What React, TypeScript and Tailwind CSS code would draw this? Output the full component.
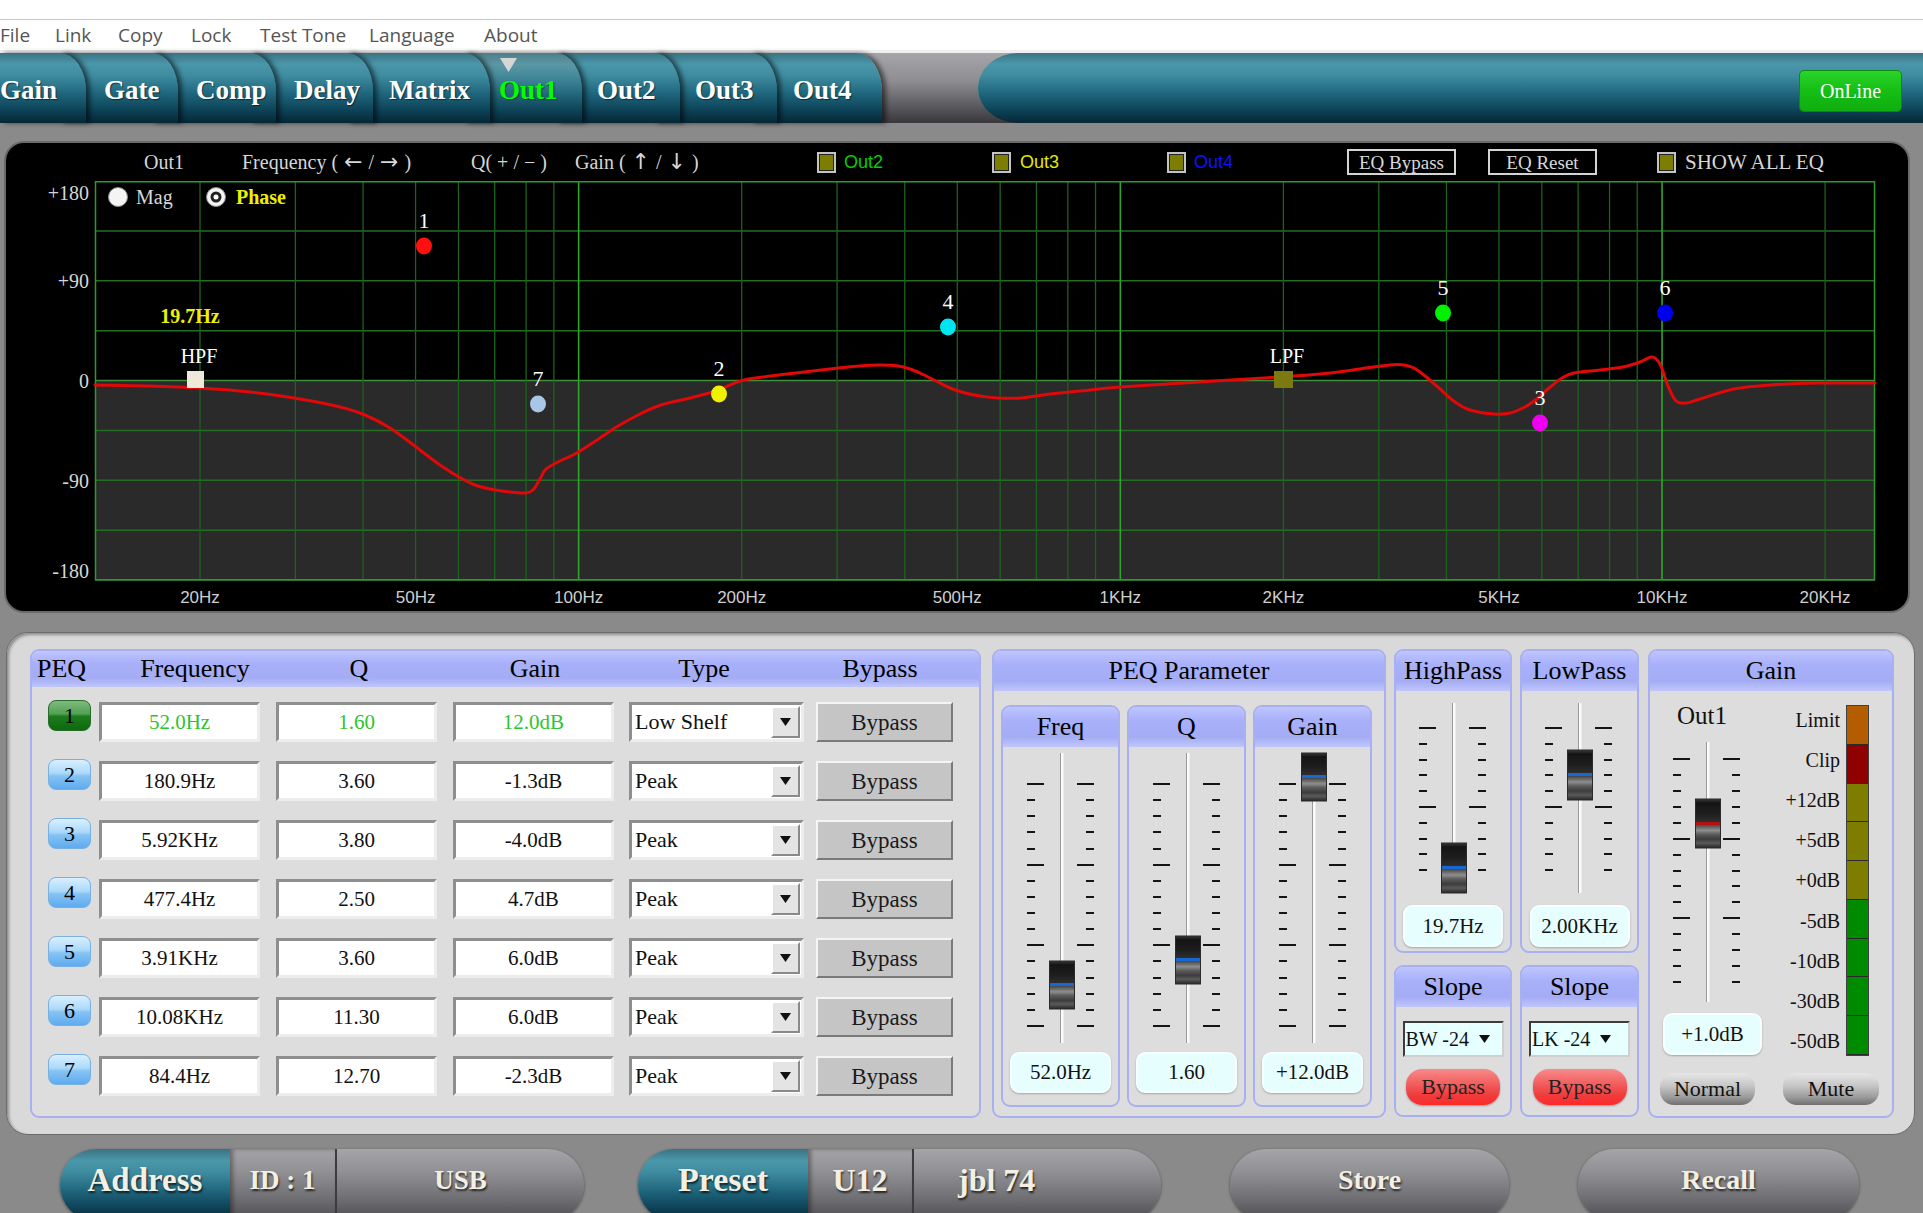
import React from "react";

const SERIF = "font-['Liberation_Serif',serif]";
const SANS = "font-['Liberation_Sans',sans-serif]";
const OPEN = "font-['Open_Sans',sans-serif]";
const ARROW = "inline-block mx-[6px] font-['DejaVu_Sans',sans-serif] text-[22px]";

const TEAL =
  "bg-[linear-gradient(to_bottom,#3b7283_0%,#4b97aa_16%,#3f8ca0_32%,#1f667d_58%,#0e455a_80%,#052736_100%)]";
const TEAL_ACTIVE =
  "bg-[linear-gradient(to_bottom,#4f7d89_0%,#5b97a5_16%,#468b9c_32%,#23687d_58%,#0f465a_80%,#052736_100%)]";
const GRAYPILL =
  "bg-[linear-gradient(to_bottom,#a5a5a9_0%,#929296_30%,#737377_65%,#4d4d51_100%)]";
const GRAYMETAL =
  "bg-[linear-gradient(to_bottom,#a6a6aa_0%,#8e8e92_40%,#5c5c60_75%,#38383c_100%)]";
const LAV_HEAD =
  "bg-[linear-gradient(to_bottom,#bec5ff_0%,#a8b0fa_35%,#a4acf6_75%,#c0c6fb_100%)]";
const GROUP =
  "border-2 border-[#a9b0f1] rounded-[9px] bg-[#dddddd] overflow-hidden flex flex-col";
const INSET =
  "bg-white border-[3px] border-t-[#8e8e8e] border-l-[#8e8e8e] border-r-[#ededed] border-b-[#ededed]";
const RAISED =
  "bg-[#c5c5c5] border-2 border-t-[#f4f4f4] border-l-[#f4f4f4] border-r-[#7a7a7a] border-b-[#7a7a7a]";
const VALUEBOX =
  "bg-[#e6fefe] rounded-[9px] border-2 border-[#f6ffff] shadow-[0_1px_2px_rgba(0,0,0,0.25)] flex items-center justify-center text-[21px] text-[#111] leading-none";

function Menu() {
  const items: [string, string][] = [
    ["File", "w-[55px]"],
    ["Link", "w-[63px]"],
    ["Copy", "w-[73px]"],
    ["Lock", "w-[69px]"],
    ["Test Tone", "w-[109px]"],
    ["Language", "w-[115px]"],
    ["About", "w-[80px]"],
  ];
  return (
    <>
      <div className="h-[20px] bg-white border-b border-[#c8c8c8]" />
      <div className={`h-[30px] bg-white flex items-center text-[19px] text-[#555] ${OPEN}`}>
        {items.map(([t, w]) => (
          <div key={t} className={`${w} whitespace-nowrap leading-none`}>
            {t}
          </div>
        ))}
      </div>
      <div className="h-[3px] bg-[#efefef]" />
    </>
  );
}

function TabBar() {
  const tabs = [
    { t: "Gain", cls: "w-[86px] pl-0 z-[9]" },
    { t: "Gate", cls: "w-[118px] pl-[44px] -ml-[26px] z-[8]" },
    { t: "Comp", cls: "w-[124px] pl-[44px] -ml-[26px] z-[7]" },
    { t: "Delay", cls: "w-[123px] pl-[44px] -ml-[26px] z-[6]" },
    { t: "Matrix", cls: "w-[143px] pl-[42px] -ml-[26px] z-[5]" },
    { t: "Out1", cls: "w-[118px] pl-[35px] -ml-[26px] z-[4]", active: true },
    { t: "Out2", cls: "w-[124px] pl-[41px] -ml-[26px] z-[3]" },
    { t: "Out3", cls: "w-[123px] pl-[41px] -ml-[26px] z-[2]" },
    { t: "Out4", cls: "w-[131px] pl-[42px] -ml-[26px] z-[1]" },
  ];
  return (
    <div className={`flex h-[70px] ${GRAYMETAL}`}>
      <div className="flex h-full">
        {tabs.map((tb) => (
          <div
            key={tb.t}
            className={`relative ${tb.cls} h-full flex items-center pt-[4px] rounded-tr-[26px_38px] ${
              tb.active ? TEAL_ACTIVE : TEAL
            } shadow-[4px_0_5px_rgba(0,0,0,0.55)] text-[27px] font-bold ${
              tb.active ? "text-[#00ff00]" : "text-white"
            } [text-shadow:1px_1px_1px_rgba(0,0,0,0.5)] whitespace-nowrap leading-none`}
          >
            {tb.active && (
              <svg className="absolute left-[36px] top-[5px]" width="17" height="14" viewBox="0 0 17 14">
                <polygon points="0,0 17,0 8.5,14" fill="#d6d6d6" />
              </svg>
            )}
            {tb.t}
          </div>
        ))}
      </div>
      <div
        className={`ml-[96px] flex-1 h-full rounded-l-[40px_35px] ${TEAL} flex items-center justify-end pr-[21px]`}
      >
        <div className="mt-[6px] w-[103px] h-[42px] rounded-[5px] bg-[linear-gradient(to_bottom,#2ad42a,#15be15_50%,#0fae0f)] border border-[#0c8c0c] flex items-center justify-center text-[20px] text-white leading-none">
          OnLine
        </div>
      </div>
    </div>
  );
}

function Check() {
  return <div className="w-[19px] h-[21px] border-2 border-[#c4c4c4] bg-[#7d7d00] shadow-[inset_0_0_0_1px_#222]" />;
}

const fx = (f: number) => 200 + 541.7 * Math.log10(f / 20);

function smoothPath(pts: number[][]) {
  let d = `M${pts[0][0]},${pts[0][1]}`;
  for (let i = 0; i < pts.length - 1; i++) {
    const p0 = pts[i - 1] || pts[i];
    const p1 = pts[i];
    const p2 = pts[i + 1];
    const p3 = pts[i + 2] || p2;
    const c1x = p1[0] + (p2[0] - p0[0]) / 6;
    const c1y = p1[1] + (p2[1] - p0[1]) / 6;
    const c2x = p2[0] - (p3[0] - p1[0]) / 6;
    const c2y = p2[1] - (p3[1] - p1[1]) / 6;
    d += ` C${c1x.toFixed(1)},${c1y.toFixed(1)} ${c2x.toFixed(1)},${c2y.toFixed(1)} ${p2[0]},${p2[1]}`;
  }
  return d;
}

const curvePts = [
  [95, 385], [150, 386], [200, 388], [250, 392], [300, 399], [340, 407], [365, 415], [390, 428],
  [416, 447], [440, 465], [459, 477], [475, 485], [490, 489], [510, 492], [526, 493], [533, 490],
  [540, 479], [546, 469], [560, 461], [575, 454], [600, 438], [618, 426], [640, 414], [661, 405],
  [690, 398], [716, 391], [730, 385], [744, 380], [770, 376], [796, 373], [830, 369], [860, 366],
  [880, 365], [898, 366], [910, 369], [922, 374], [936, 381], [950, 388], [965, 393], [980, 396],
  [997, 398], [1021, 398], [1050, 394], [1080, 391], [1120, 387], [1200, 382], [1279, 377],
  [1320, 374], [1360, 369], [1390, 365], [1404, 365], [1414, 368], [1425, 376], [1439, 388],
  [1455, 402], [1470, 410], [1494, 414], [1510, 413], [1525, 407], [1538, 398], [1549, 388],
  [1562, 378], [1574, 373], [1600, 370], [1623, 367], [1640, 362], [1651, 357], [1656, 359],
  [1661, 366], [1668, 386], [1676, 401], [1686, 403], [1700, 399], [1734, 389], [1770, 385],
  [1820, 383], [1875, 383],
];

function GraphPanel() {
  const hl = Array.from({ length: 9 }, (_, i) => 181 + i * 49.875);
  const freqs = [
    20, 30, 40, 50, 60, 70, 80, 90, 100, 200, 300, 400, 500, 600, 700, 800, 900, 1000, 2000, 3000,
    4000, 5000, 6000, 7000, 8000, 9000, 10000, 20000,
  ];
  const xlabels: [number, string][] = [
    [20, "20Hz"], [50, "50Hz"], [100, "100Hz"], [200, "200Hz"], [500, "500Hz"],
    [1000, "1KHz"], [2000, "2KHz"], [5000, "5KHz"], [10000, "10KHz"], [20000, "20KHz"],
  ];
  const ylabels: [number, string][] = [
    [200, "+180"], [288, "+90"], [388, "0"], [488, "-90"], [578, "-180"],
  ];
  const markers = [
    { n: "1", x: 424, y: 246, c: "#ff1010" },
    { n: "7", x: 538, y: 404, c: "#a8c6e6" },
    { n: "2", x: 719, y: 394, c: "#f0f000" },
    { n: "4", x: 948, y: 327, c: "#00e6f0" },
    { n: "5", x: 1443, y: 313, c: "#00f000" },
    { n: "6", x: 1665, y: 313, c: "#0000f0" },
    { n: "3", x: 1540, y: 423, c: "#f000f0" },
  ];
  return (
    <div className="ml-[6px] mt-[20px] w-[1902px] h-[468px] rounded-[18px] bg-black shadow-[0_0_0_2px_#6a6a6a] overflow-hidden flex flex-col">
      <div className="h-[38px] flex items-center text-[20px] text-[#d6d6d6] whitespace-nowrap leading-none">
        <div className="w-[138px] shrink-0" />
        <div className="w-[98px] shrink-0">Out1</div>
        <div className="w-[229px] shrink-0">
          Frequency (<span className={ARROW}>←</span>/<span className={ARROW}>→</span>)
        </div>
        <div className="w-[104px] shrink-0">Q( + / − )</div>
        <div className="w-[242px] shrink-0">
          Gain (<span className={ARROW}>↑</span>/<span className={ARROW}>↓</span>)
        </div>
        <div className="w-[175px] shrink-0 flex items-center">
          <Check />
          <span className={`ml-[8px] text-[18px] text-[#00d000] ${SANS}`}>Out2</span>
        </div>
        <div className="w-[175px] shrink-0 flex items-center">
          <Check />
          <span className={`ml-[9px] text-[18px] text-[#e6e600] ${SANS}`}>Out3</span>
        </div>
        <div className="w-[180px] shrink-0 flex items-center">
          <Check />
          <span className={`ml-[8px] text-[18px] text-[#1010ff] ${SANS}`}>Out4</span>
        </div>
        <div className="w-[141px] shrink-0">
          <div className="w-[109px] h-[26px] border-2 border-[#d4d4d4] bg-black flex items-center justify-center text-[19px] text-[#d8d8d8]">
            EQ Bypass
          </div>
        </div>
        <div className="w-[169px] shrink-0">
          <div className="w-[109px] h-[26px] border-2 border-[#d4d4d4] bg-black flex items-center justify-center text-[19px] text-[#d8d8d8]">
            EQ Reset
          </div>
        </div>
        <div className="flex items-center">
          <Check />
          <span className="ml-[9px] text-[21px] text-[#d6d6d6]">SHOW ALL EQ</span>
        </div>
      </div>
      <svg width={1902} height={430} viewBox="6 181 1902 430" className="block">
        <rect x={95} y={380.5} width={1780} height={199.5} fill="#2a2a2a" />
        {hl.map((y, i) => (
          <line key={`h${i}`} x1={95} x2={1875} y1={y} y2={y} stroke={i === 4 ? "#3f8f3f" : "#246e24"} strokeWidth={1.5} />
        ))}
        {freqs.map((f) => {
          const major = f === 100 || f === 1000 || f === 10000;
          const x = fx(f);
          return (
            <line key={`v${f}`} x1={x} x2={x} y1={181} y2={580} stroke={major ? "#2fa52f" : "#1d631d"} strokeWidth={major ? 1.6 : 1.3} />
          );
        })}
        <rect x={95.5} y={181.75} width={1779} height={398} fill="none" stroke="#2e9a2e" strokeWidth={1.5} />
        {ylabels.map(([y, t]) => (
          <text key={t} x={89} y={y} textAnchor="end" fill="#d6d6d6" fontSize={20} fontFamily="Liberation Serif, serif">
            {t}
          </text>
        ))}
        {xlabels.map(([f, t]) => (
          <text key={t} x={fx(f)} y={603} textAnchor="middle" fill="#cfcfcf" fontSize={17} fontFamily="Liberation Sans, sans-serif">
            {t}
          </text>
        ))}
        <circle cx={118} cy={197} r={9.5} fill="#f4f4f4" stroke="#8a8a8a" strokeWidth={1} />
        <text x={136} y={204} fill="#d6d6d6" fontSize={20} fontFamily="Liberation Serif, serif">
          Mag
        </text>
        <circle cx={216} cy={197} r={9.5} fill="#f4f4f4" stroke="#8a8a8a" strokeWidth={1} />
        <circle cx={216} cy={197} r={5.5} fill="#222" />
        <circle cx={216} cy={197} r={2.5} fill="#fff" />
        <text x={236} y={204} fill="#f0f000" fontSize={20} fontWeight="bold" fontFamily="Liberation Serif, serif">
          Phase
        </text>
        <path d={smoothPath(curvePts)} fill="none" stroke="#e00808" strokeWidth={3} strokeLinejoin="round" strokeLinecap="round" />
        <rect x={187} y={371} width={17} height={17} fill="#efe9dc" />
        <text x={199} y={363} textAnchor="middle" fill="#ffffff" fontSize={20} fontFamily="Liberation Serif, serif">
          HPF
        </text>
        <text x={190} y={323} textAnchor="middle" fill="#f0f000" fontSize={20} fontWeight="bold" fontFamily="Liberation Serif, serif">
          19.7Hz
        </text>
        <rect x={1274} y={371} width={19} height={17} fill="#7a7a10" />
        <text x={1287} y={363} textAnchor="middle" fill="#ffffff" fontSize={20} fontFamily="Liberation Serif, serif">
          LPF
        </text>
        {markers.map((m) => (
          <g key={m.n}>
            <ellipse cx={m.x} cy={m.y} rx={8} ry={8.5} fill={m.c} />
            <text x={m.x} y={m.y - 18} textAnchor="middle" fill="#ffffff" fontSize={22} fontFamily="Liberation Serif, serif">
              {m.n}
            </text>
          </g>
        ))}
      </svg>
    </div>
  );
}

type FaderProps = {
  id: string;
  w: number;
  h: number;
  cx: number;
  t0: number;
  t1: number;
  tickStart: number;
  step: number;
  n: number;
  majors: number[];
  thumbTop: number;
  thumbH: number;
  line: string;
};

function Fader({ id, w, h, cx, t0, t1, tickStart, step, n, majors, thumbTop, thumbH, line }: FaderProps) {
  const ticks = Array.from({ length: n }, (_, i) => {
    const y = Math.round(tickStart + i * step);
    const major = majors.includes(i);
    return (
      <g key={i}>
        <line x1={cx - 35} x2={major ? cx - 18 : cx - 27} y1={y} y2={y} stroke="#151515" strokeWidth={2} />
        <line x1={major ? cx + 15 : cx + 24} x2={cx + 32} y1={y} y2={y} stroke="#151515" strokeWidth={2} />
      </g>
    );
  });
  return (
    <svg width={w} height={h} className="block shrink-0">
      <defs>
        <linearGradient id={`th-${id}`} x1="0" y1="0" x2="0" y2="1">
          <stop offset="0" stopColor="#3a3a3a" />
          <stop offset="0.08" stopColor="#141414" />
          <stop offset="0.3" stopColor="#1e1e1e" />
          <stop offset="0.46" stopColor="#2e2e2e" />
          <stop offset="0.465" stopColor={line} />
          <stop offset="0.525" stopColor={line} />
          <stop offset="0.53" stopColor="#4a4a4a" />
          <stop offset="0.64" stopColor="#8e8e8e" />
          <stop offset="0.72" stopColor="#5c5c5c" />
          <stop offset="0.82" stopColor="#3c3c3c" />
          <stop offset="0.9" stopColor="#5a5a5a" />
          <stop offset="1" stopColor="#262626" />
        </linearGradient>
      </defs>
      <rect x={cx - 1.5} y={t0} width={3} height={t1 - t0} fill="#fbfbfb" />
      <line x1={cx - 1.5} x2={cx - 1.5} y1={t0} y2={t1} stroke="#9a9a9a" strokeWidth={1} />
      {ticks}
      <rect x={cx - 12.5} y={thumbTop} width={25} height={thumbH} fill={`url(#th-${id})`} stroke="#2a2a2a" strokeWidth={1} />
    </svg>
  );
}

function DownTri({ className }: { className?: string }) {
  return (
    <svg className={className} width="11" height="8" viewBox="0 0 11 8">
      <polygon points="0,0 11,0 5.5,8" fill="#111" />
    </svg>
  );
}

function PEQTable() {
  const rows = [
    ["52.0Hz", "1.60", "12.0dB", "Low Shelf"],
    ["180.9Hz", "3.60", "-1.3dB", "Peak"],
    ["5.92KHz", "3.80", "-4.0dB", "Peak"],
    ["477.4Hz", "2.50", "4.7dB", "Peak"],
    ["3.91KHz", "3.60", "6.0dB", "Peak"],
    ["10.08KHz", "11.30", "6.0dB", "Peak"],
    ["84.4Hz", "12.70", "-2.3dB", "Peak"],
  ];
  return (
    <div className={`${GROUP} w-[951px] h-[469px] shrink-0`}>
      <div className={`h-[36px] shrink-0 flex items-center ${LAV_HEAD} text-[26px] text-black leading-none`}>
        <div className="w-[68px] pl-[5px]">PEQ</div>
        <div className="w-[190px] text-center">Frequency</div>
        <div className="w-[138px] text-center">Q</div>
        <div className="w-[214px] text-center">Gain</div>
        <div className="w-[124px] text-center">Type</div>
        <div className="w-[213px] pl-[15px] text-center">Bypass</div>
      </div>
      <div className="flex flex-col gap-[19px] pt-[15px]">
        {rows.map((r, i) => {
          const c = i === 0 ? "text-[#2ec42e]" : "text-[#111]";
          return (
            <div key={i} className="h-[40px] flex items-center leading-none">
              <div
                className={`ml-[16px] mb-[13px] w-[43px] h-[31px] rounded-[8px] flex items-center justify-center text-[22px] text-black ${
                  i === 0
                    ? "bg-[linear-gradient(to_bottom,#7dbb7d_0%,#52a052_45%,#1f7b1f_52%,#0b6a0b_100%)] border border-[#2a6a2a]"
                    : "bg-[linear-gradient(to_bottom,#d8efff_0%,#acd9fa_45%,#86c3f3_55%,#5eabf0_100%)] border border-[#7ab0e0]"
                }`}
              >
                {i + 1}
              </div>
              <div className={`ml-[8px] w-[161px] h-[40px] ${INSET} flex items-center justify-center text-[21px] ${c}`}>{r[0]}</div>
              <div className={`ml-[16px] w-[161px] h-[40px] ${INSET} flex items-center justify-center text-[21px] ${c}`}>{r[1]}</div>
              <div className={`ml-[16px] w-[161px] h-[40px] ${INSET} flex items-center justify-center text-[21px] ${c}`}>{r[2]}</div>
              <div className={`ml-[15px] w-[175px] h-[40px] ${INSET} flex items-center`}>
                <span className="flex-1 pl-[3px] text-[22px] text-[#111] whitespace-nowrap">{r[3]}</span>
                <div className="mr-[1px] w-[29px] h-[32px] bg-[#e4e4e4] border-2 border-t-white border-l-white border-r-[#8a8a8a] border-b-[#8a8a8a] flex items-center justify-center">
                  <DownTri />
                </div>
              </div>
              <div className={`ml-[12px] w-[137px] h-[40px] ${RAISED} flex items-center justify-center text-[23px] text-[#1a1a1a]`}>Bypass</div>
            </div>
          );
        })}
      </div>
    </div>
  );
}

function Head({ children, h }: { children: React.ReactNode; h: string }) {
  return (
    <div className={`${h} shrink-0 flex items-center justify-center ${LAV_HEAD} text-[26px] text-black leading-none whitespace-nowrap`}>
      {children}
    </div>
  );
}

function SubFader({ id, title, thumbTop, value }: { id: string; title: string; thumbTop: number; value: string }) {
  return (
    <div className={`${GROUP} w-[119px] h-[402px] shrink-0`}>
      <Head h="h-[40px]">{title}</Head>
      <Fader id={id} w={115} h={300} cx={59} t0={6} t1={296} tickStart={37} step={16.13} n={16} majors={[0, 5, 10, 15]} thumbTop={thumbTop} thumbH={48} line="#1768d2" />
      <div className={`mt-[5px] mx-auto w-[101px] h-[41px] ${VALUEBOX}`}>{value}</div>
    </div>
  );
}

function PassColumn({ id, title, thumbTop, value, slope, cls }: { id: string; title: string; thumbTop: number; value: string; slope: string; cls: string }) {
  return (
    <div className={`${cls} flex flex-col shrink-0`}>
      <div className={`${GROUP} h-[304px]`}>
        <Head h="h-[40px]">{title}</Head>
        <Fader id={id} w={114} h={210} cx={58} t0={12} t1={202} tickStart={37} step={15.8} n={10} majors={[0, 5]} thumbTop={thumbTop} thumbH={50} line="#1768d2" />
        <div className={`mt-[4px] mx-auto w-[100px] h-[42px] ${VALUEBOX}`}>{value}</div>
      </div>
      <div className={`${GROUP} mt-[12px] h-[152px]`}>
        <Head h="h-[40px]">Slope</Head>
        <div className="mt-[14px] mx-auto w-[101px] h-[36px] bg-[#e6ffff] border-2 border-t-[#3c3c3c] border-l-[#3c3c3c] border-r-[#cfcfcf] border-b-[#cfcfcf] flex items-center pl-[1px] text-[20px] text-[#111] leading-none whitespace-nowrap">
          <span>{slope}</span>
          <DownTri className="ml-[10px]" />
        </div>
        <div className="mt-[12px] mx-auto w-[94px] h-[36px] rounded-[16px] bg-[linear-gradient(to_bottom,#f78a8a_0%,#f25a5a_45%,#ef3a3a_75%,#ff2a2a_100%)] shadow-[0_1px_2px_rgba(0,0,0,0.3)] flex items-center justify-center text-[22px] text-[#222] leading-none">
          Bypass
        </div>
      </div>
    </div>
  );
}

function GainGroup() {
  const labels = ["Limit", "Clip", "+12dB", "+5dB", "+0dB", "-5dB", "-10dB", "-30dB", "-50dB"];
  const segs = [
    "bg-[#b35c00]",
    "bg-[#900000]",
    "bg-[#7d7d00]",
    "bg-[#7d7d00]",
    "bg-[#7d7d00]",
    "bg-[#008a00]",
    "bg-[#008a00]",
    "bg-[#008a00]",
    "bg-[#008a00]",
  ];
  const btn =
    "h-[32px] rounded-[14px] bg-[linear-gradient(to_bottom,#e6e6e6_0%,#c6c6c6_40%,#9c9c9c_75%,#707070_100%)] flex items-center justify-center text-[22px] text-[#111] leading-none";
  return (
    <div className={`${GROUP} ml-[9px] w-[246px] h-[469px] shrink-0`}>
      <Head h="h-[40px]">Gain</Head>
      <div className="h-[370px] flex">
        <div className="w-[124px] flex flex-col items-center shrink-0">
          <div className="mt-[8px] h-[32px] -ml-[20px] flex items-center text-[25px] text-[#111] leading-none">Out1</div>
          <Fader id="g" w={124} h={277} cx={58} t0={11} t1={271} tickStart={28} step={15.93} n={15} majors={[0, 5, 10]} thumbTop={68} thumbH={49} line="#b41010" />
          <div className={`mt-[5px] ml-[1px] w-[99px] h-[42px] ${VALUEBOX}`}>+1.0dB</div>
        </div>
        <div className="w-[66px] mt-[9px] flex flex-col shrink-0">
          {labels.map((l) => (
            <div key={l} className="h-[40.25px] flex items-center justify-end text-[20px] text-[#111] leading-none whitespace-nowrap">
              {l}
            </div>
          ))}
        </div>
        <div className="mt-[14px] ml-[6px] w-[23px] h-[351px] flex flex-col border border-[#404040]">
          {segs.map((s, i) => (
            <div key={i} className={`flex-1 ${s} border-b border-[#2a2a2a]`} />
          ))}
        </div>
      </div>
      <div className="mt-[12px] flex">
        <div className={`ml-[10px] w-[95px] ${btn}`}>Normal</div>
        <div className={`ml-[28px] w-[96px] ${btn}`}>Mute</div>
      </div>
    </div>
  );
}

function BottomPanel() {
  return (
    <div className="ml-[6px] mt-[21px] w-[1909px] h-[503px] rounded-[22px] bg-[#d9d9d9] border border-[#6b6b6b] shadow-[inset_2px_2px_3px_rgba(0,0,0,0.35)] flex items-start pt-[16px] pl-[23px]">
      <PEQTable />
      <div className={`${GROUP} ml-[11px] w-[394px] h-[469px] shrink-0`}>
        <Head h="h-[40px]">PEQ Parameter</Head>
        <div className="flex pl-[7px] pt-[14px] gap-[7px]">
          <SubFader id="f" title="Freq" thumbTop={214} value="52.0Hz" />
          <SubFader id="q" title="Q" thumbTop={189} value="1.60" />
          <SubFader id="gn" title="Gain" thumbTop={6} value="+12.0dB" />
        </div>
      </div>
      <PassColumn id="hp" title="HighPass" thumbTop={152} value="19.7Hz" slope="BW -24" cls="ml-[8px] w-[118px]" />
      <PassColumn id="lp" title="LowPass" thumbTop={59} value="2.00KHz" slope="LK -24" cls="ml-[8px] w-[119px]" />
      <GainGroup />
    </div>
  );
}

function Footer() {
  const txt = "text-[#f3efe3] font-bold leading-none whitespace-nowrap [text-shadow:1px_2px_2px_rgba(0,0,0,0.7)]";
  return (
    <div className="mt-[14px] flex h-[72px]">
      <div className="ml-[60px] w-[524px] h-full flex rounded-[36px] overflow-hidden shadow-[0_1px_3px_rgba(0,0,0,0.5)]">
        <div className={`w-[170px] ${TEAL} flex items-center justify-center pb-[10px] text-[33px] ${txt}`}>Address</div>
        <div className={`w-[105px] ${GRAYPILL} shadow-[inset_3px_0_4px_rgba(0,0,0,0.35)] flex items-center justify-center pb-[10px] text-[27px] ${txt}`}>ID : 1</div>
        <div className={`flex-1 ${GRAYPILL} border-l-2 border-[#3c3c40] flex items-center justify-center pb-[10px] text-[27px] ${txt}`}>USB</div>
      </div>
      <div className="ml-[54px] w-[523px] h-full flex rounded-[36px] overflow-hidden shadow-[0_1px_3px_rgba(0,0,0,0.5)]">
        <div className={`w-[170px] ${TEAL} flex items-center justify-center pb-[10px] text-[34px] ${txt}`}>Preset</div>
        <div className={`w-[104px] ${GRAYPILL} shadow-[inset_3px_0_4px_rgba(0,0,0,0.35)] flex items-center justify-center pb-[10px] text-[32px] ${txt}`}>U12</div>
        <div className={`flex-1 ${GRAYPILL} border-l-2 border-[#3c3c40] flex items-center pl-[44px] pb-[10px] text-[32px] ${txt}`}>jbl 74</div>
      </div>
      <div className={`ml-[69px] w-[279px] h-full rounded-[36px] ${GRAYPILL} shadow-[0_1px_3px_rgba(0,0,0,0.5)] flex items-center justify-center pb-[10px] text-[28px] ${txt}`}>
        Store
      </div>
      <div className={`ml-[69px] w-[281px] h-full rounded-[36px] ${GRAYPILL} shadow-[0_1px_3px_rgba(0,0,0,0.5)] flex items-center justify-center pb-[10px] text-[28px] ${txt}`}>
        Recall
      </div>
    </div>
  );
}

export default function App() {
  return (
    <div className={`w-[1923px] h-[1213px] overflow-hidden bg-[#8a8a8a] ${SERIF}`}>
      <Menu />
      <TabBar />
      <GraphPanel />
      <BottomPanel />
      <Footer />
    </div>
  );
}
